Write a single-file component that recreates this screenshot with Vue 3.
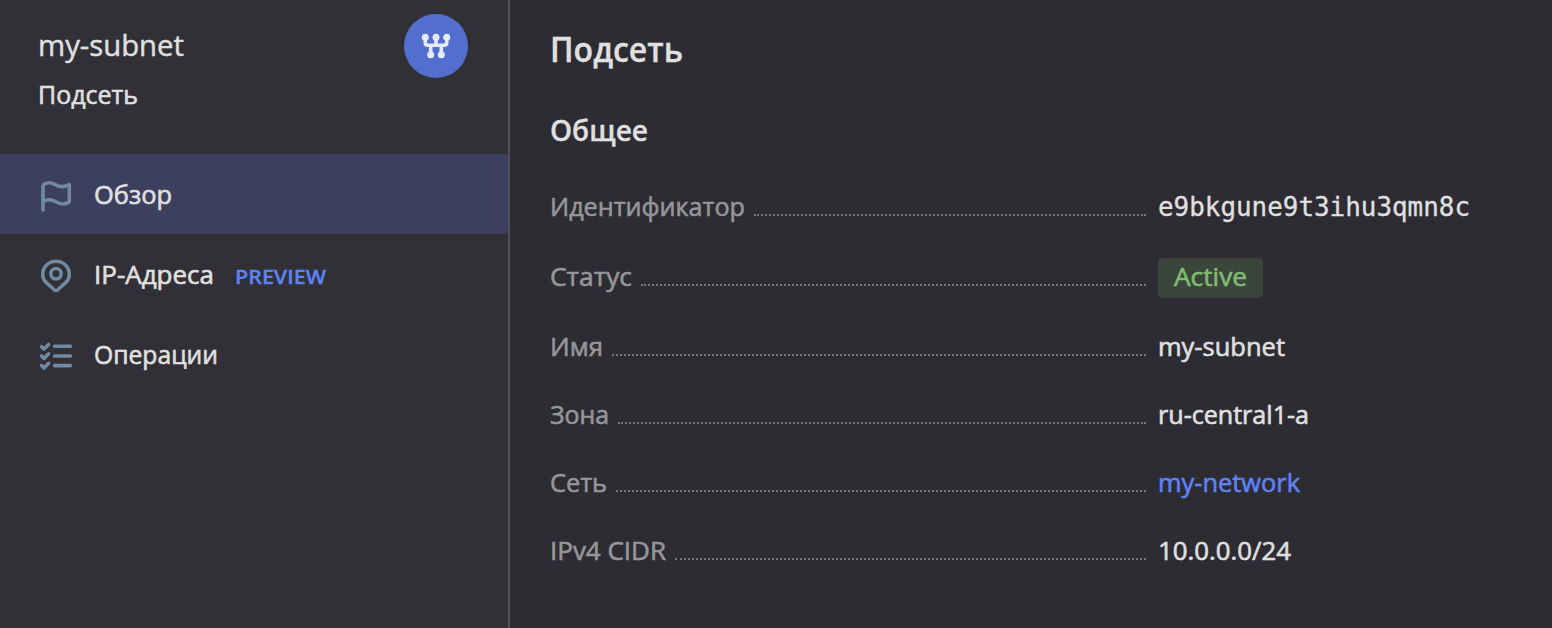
<script setup>
const nav = [
  { t: 'Обзор', w: 78, icon: 'flag', active: true },
  { t: 'IP-Адреса', w: 120, icon: 'pin', badge: 'PREVIEW' },
  { t: 'Операции', w: 124, icon: 'list' },
]
const rows = [
  { k: 'Идентификатор', w: 195, v: 'e9bkgune9t3ihu3qmn8c', vw: 312, c: 'mono' },
  { k: 'Статус', w: 82, v: 'Active', vw: 73, c: 'status' },
  { k: 'Имя', w: 53, v: 'my-subnet', vw: 127, c: '' },
  { k: 'Зона', w: 59, v: 'ru-central1-a', vw: 151, c: '' },
  { k: 'Сеть', w: 57, v: 'my-network', vw: 142, c: 'link' },
  { k: 'IPv4 CIDR', w: 116, v: '10.0.0.0/24', vw: 133, c: '' },
]
</script>

<template>
  <div class="page">
    <aside class="side">
      <header class="head">
        <div>
          <svg class="t name" width="146" height="40"><text y="28" textLength="146" lengthAdjust="spacingAndGlyphs">my-subnet</text></svg>
          <svg class="t kind" width="100" height="40"><text y="28" textLength="100" lengthAdjust="spacingAndGlyphs">Подсеть</text></svg>
        </div>
        <div class="logo">
          <svg width="32" height="32" viewBox="0 0 32 32" fill="none" stroke="#e6eafa" stroke-width="3.6">
            <path d="M5.3 7V12.5Q5.3 15.3 8 15.3H24Q26.7 15.3 26.7 12.5V7M16 7V15.3M10.7 15.3V24.7M21.3 15.3V24.7" />
            <g fill="#e6eafa" stroke="none"><circle cx="5.3" cy="7.2" r="3.5" /><circle cx="16" cy="7.2" r="3.5" /><circle cx="26.7" cy="7.2" r="3.5" /><circle cx="10.7" cy="24.8" r="3.5" /><circle cx="21.3" cy="24.8" r="3.5" /></g>
          </svg>
        </div>
      </header>
      <nav>
        <div v-for="n in nav" :key="n.t" class="item" :class="{ active: n.active }">
          <svg class="ico" width="36" height="36" viewBox="0 0 36 36">
            <path v-if="n.icon === 'flag'" d="M5 34V10Q5 8.8 6 8.2C9.5 6.3 13.5 6.3 17.5 8.7S26.5 11.2 31.3 8.7V25Q31.3 26.2 30.3 26.7C26 28.8 22 28.4 17.8 25.8S9 23.2 5 25.5" />
            <template v-else-if="n.icon === 'pin'"><path d="M18 34.7C16 34.7 14.5 31.5 10.5 28.6C7 26 4.7 22.6 4.7 18.2A13.3 13 0 0 1 31.3 18.2C31.3 22.6 29 26 25.5 28.6C21.5 31.5 20 34.7 18 34.7Z" /><circle cx="18" cy="17.7" r="5.2" /></template>
            <path v-else d="M16.5 10.3H32.4M16.5 20H32.4M16.5 29.6H32.4M3.6 10.7L6 13.1L10.6 8.5M3.6 20L6 22.4L10.6 17.8M3.6 29.5L6 31.9L10.6 27.3" />
          </svg>
          <svg class="t" :width="n.w" height="40"><text y="30" :textLength="n.w" lengthAdjust="spacingAndGlyphs">{{ n.t }}</text></svg>
          <svg v-if="n.badge" class="t preview" width="92" height="40"><text y="30" textLength="91" lengthAdjust="spacingAndGlyphs">PREVIEW</text></svg>
        </div>
      </nav>
    </aside>
    <main>
      <h1><svg class="t" width="134" height="48"><text y="36" textLength="133" lengthAdjust="spacingAndGlyphs">Подсеть</text></svg></h1>
      <h2><svg class="t" width="100" height="40"><text y="29" textLength="98" lengthAdjust="spacingAndGlyphs">Общее</text></svg></h2>
      <dl>
        <div v-for="r in rows" :key="r.k" class="row">
          <dt><svg class="t" :width="r.w" height="40"><text y="28" :textLength="r.w" lengthAdjust="spacingAndGlyphs">{{ r.k }}</text></svg><i class="dots"></i></dt>
          <dd :class="r.c"><svg class="t" :width="r.vw" height="40"><text y="28" :textLength="r.vw" lengthAdjust="spacingAndGlyphs">{{ r.v }}</text></svg></dd>
        </div>
      </dl>
    </main>
  </div>
</template>

<style>
body { margin: 0; background: #2d2c33; }
</style>
<style scoped>
.page { display: flex; width: 1552px; height: 628px; background: #2d2c33; color: #e0e0e1; font: 26px "Open Sans", "Noto Sans", sans-serif; overflow: hidden; }
.t { display: block; overflow: visible; fill: currentColor; stroke: currentColor; stroke-width: .6px; flex: none; }
.side { box-sizing: border-box; width: 510px; border-right: 2px solid #505056; background: #313036; }
.head { height: 154px; box-sizing: border-box; padding: 14px 40px 0 38px; display: flex; justify-content: space-between; }
.name { margin-top: 14px; font-size: 28.5px; stroke-width: .4px; }
.kind { margin-top: 8px; }
.logo { width: 64px; height: 64px; border-radius: 50%; background: #526fce; display: grid; place-items: center; }
.item { height: 80px; display: flex; align-items: center; padding-left: 38px; box-sizing: border-box; }
.active { background: #3c3f5d; border-radius: 0 4px 4px 0; }
.ico { margin-right: 20px; fill: none; stroke: #7189a3; stroke-width: 3.6; stroke-linejoin: round; stroke-linecap: round; }
.preview { margin-left: 21px; color: #5f83f5; font-size: 20px; font-weight: 600; stroke-width: .3px; }
main { padding-left: 40px; }
h1, h2, dl, dd { margin: 0; }
h1 .t, h2 .t { stroke-width: .3px; }
h1 { font-size: 34px; padding-top: 26px; font-weight: 600; }
h2 { font-size: 28px; padding-top: 38px; font-weight: 600; }
dl { padding-top: 36px; }
.row { height: 40px; display: flex; margin-bottom: 28px; }
.row:nth-child(-n+2) { margin-bottom: 30px; }
dt { width: 596px; display: flex; color: #96969a; margin-right: 12px; }
.dots { flex: 1; height: 26px; margin-left: 9px; border-bottom: 2px dotted #77767b; }
.mono { font-family: "DejaVu Sans Mono", monospace; }
.mono .t { stroke-width: .3px; }
.link { color: #5f83f5; }
.status { background: #3a453b; color: #80bc72; border-radius: 5px; padding: 0 16px; }
</style>
